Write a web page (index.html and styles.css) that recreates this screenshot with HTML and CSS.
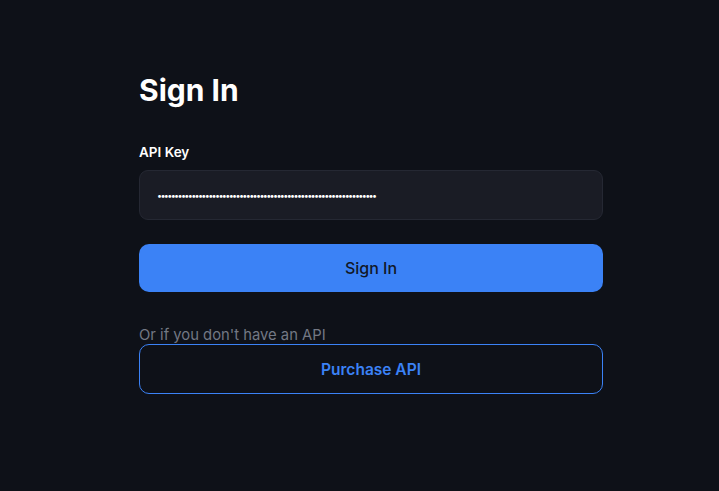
FILE: index.html
```html
<!DOCTYPE html>
<html>
<head>
<meta charset="utf-8">
<link rel="stylesheet" href="styles.css">
</head>
<body>
<main class="page">
  <section class="card">
    <h1 class="title">Sign In</h1>
    <label class="label" for="key">API Key</label>
    <input class="input" id="key" type="password" value="sk-abcdefghijklmnopqrstuvwxyz0123456789abcdefghijklmnopqrstuvwxy">
    <button class="btn-primary">Sign In</button>
    <p class="hint">Or if you don't have an API</p>
    <button class="btn-outline">Purchase API</button>
  </section>
</main>
</body>
</html>
```
FILE: styles.css
```css
* { box-sizing: border-box; }
html, body { margin: 0; height: 100%; }
body {
  background: #0e1118;
  font-family: Inter, "Noto Sans", sans-serif;
  color: #fff;
}
.page {
  display: flex;
  padding: 72px 0 0 139px;
}
.card {
  width: 464px;
  display: flex;
  flex-direction: column;
}
.title {
  margin: 0;
  font-size: 30px;
  font-weight: 700;
  line-height: 36px;
}
.label {
  margin-top: 35px;
  font-size: 13.5px;
  font-weight: 600;
  line-height: 18px;
}
.input {
  margin-top: 9px;
  height: 50px;
  background: #1a1c25;
  border: 1px solid #252833;
  border-radius: 9px;
  padding: 0 17px;
  color: #fff;
  font-family: Inter, sans-serif;
  font-size: 9px;
  letter-spacing: -1.65px;
  outline: none;
}
.btn-primary {
  margin-top: 24px;
  height: 48px;
  border: none;
  border-radius: 10px;
  background: #3b82f6;
  color: #111827;
  font-family: Inter, sans-serif;
  font-size: 16px;
  font-weight: 500;
}
.hint {
  margin: 34px 0 0;
  font-size: 14.8px;
  line-height: 18px;
  color: #737884;
}
.btn-outline {
  margin-top: 0;
  height: 50px;
  background: transparent;
  border: 1px solid #3b82f6;
  border-radius: 10px;
  color: #3b82f6;
  font-family: Inter, sans-serif;
  font-size: 15.5px;
  font-weight: 600;
}
```
